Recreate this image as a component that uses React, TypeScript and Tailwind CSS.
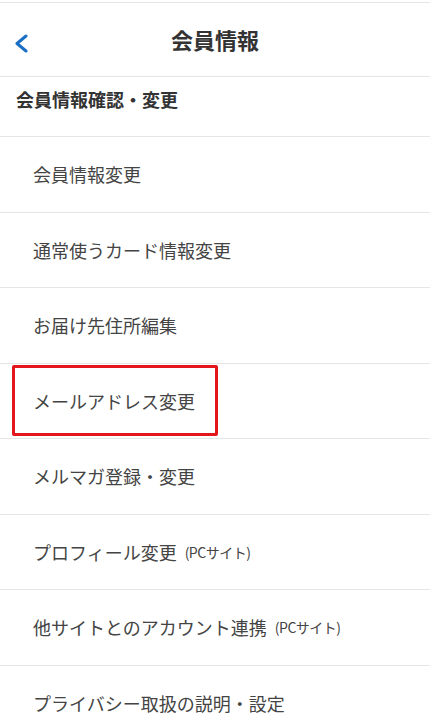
const items: { label: string; note?: string; marked?: boolean }[] = [
  { label: '会員情報変更' },
  { label: '通常使うカード情報変更' },
  { label: 'お届け先住所編集' },
  { label: 'メールアドレス変更', marked: true },
  { label: 'メルマガ登録・変更' },
  { label: 'プロフィール変更', note: '(PCサイト)' },
  { label: '他サイトとのアカウント連携', note: '(PCサイト)' },
  { label: 'プライバシー取扱の説明・設定' },
];

export default function App() {
  return (
    <div
      className="flex min-h-[725px] w-full flex-col bg-white pt-[2px] text-[#333]"
      style={{ fontFamily: '"Noto Sans CJK JP", "Noto Sans", sans-serif' }}
    >
      {/* Header */}
      <header className="relative flex h-[75px] items-center justify-center border-y border-[#e6e6e6]">
        <button type="button" className="absolute left-[13px] top-[30px] p-0">
          <svg width="16" height="20" viewBox="0 0 16 20" fill="none">
            <polyline
              points="13,3 4,10.5 13,18"
              stroke="#1a6fc4"
              strokeWidth="3"
              strokeLinecap="round"
              strokeLinejoin="round"
            />
          </svg>
        </button>
        <h1 className="-mt-[2px] text-[22px] leading-none font-bold text-[#333]">会員情報</h1>
      </header>

      {/* Section */}
      <div className="h-[60px] border-b border-[#e6e6e6] px-4 pt-[9px]">
        <h2 className="text-[18px] leading-[27px] font-bold text-[#333]">会員情報確認・変更</h2>
      </div>

      <ul className="flex flex-col">
        {items.map((item) => (
          <li
            key={item.label}
            className="relative flex h-[75.5px] items-center border-b border-[#e6e6e6] pl-[33px]"
          >
            <span className="text-[18px] leading-none text-[#444]">{item.label}</span>
            {item.note && (
              <span className="ml-[8px] text-[14px] leading-none tracking-[-0.5px] text-[#444]">{item.note}</span>
            )}
            {item.marked && (
              <div className="absolute left-[12px] top-[1px] h-[71px] w-[206px] rounded-[2px] border-[3px] border-[#e3161b]" />
            )}
          </li>
        ))}
      </ul>
    </div>
  );
}
